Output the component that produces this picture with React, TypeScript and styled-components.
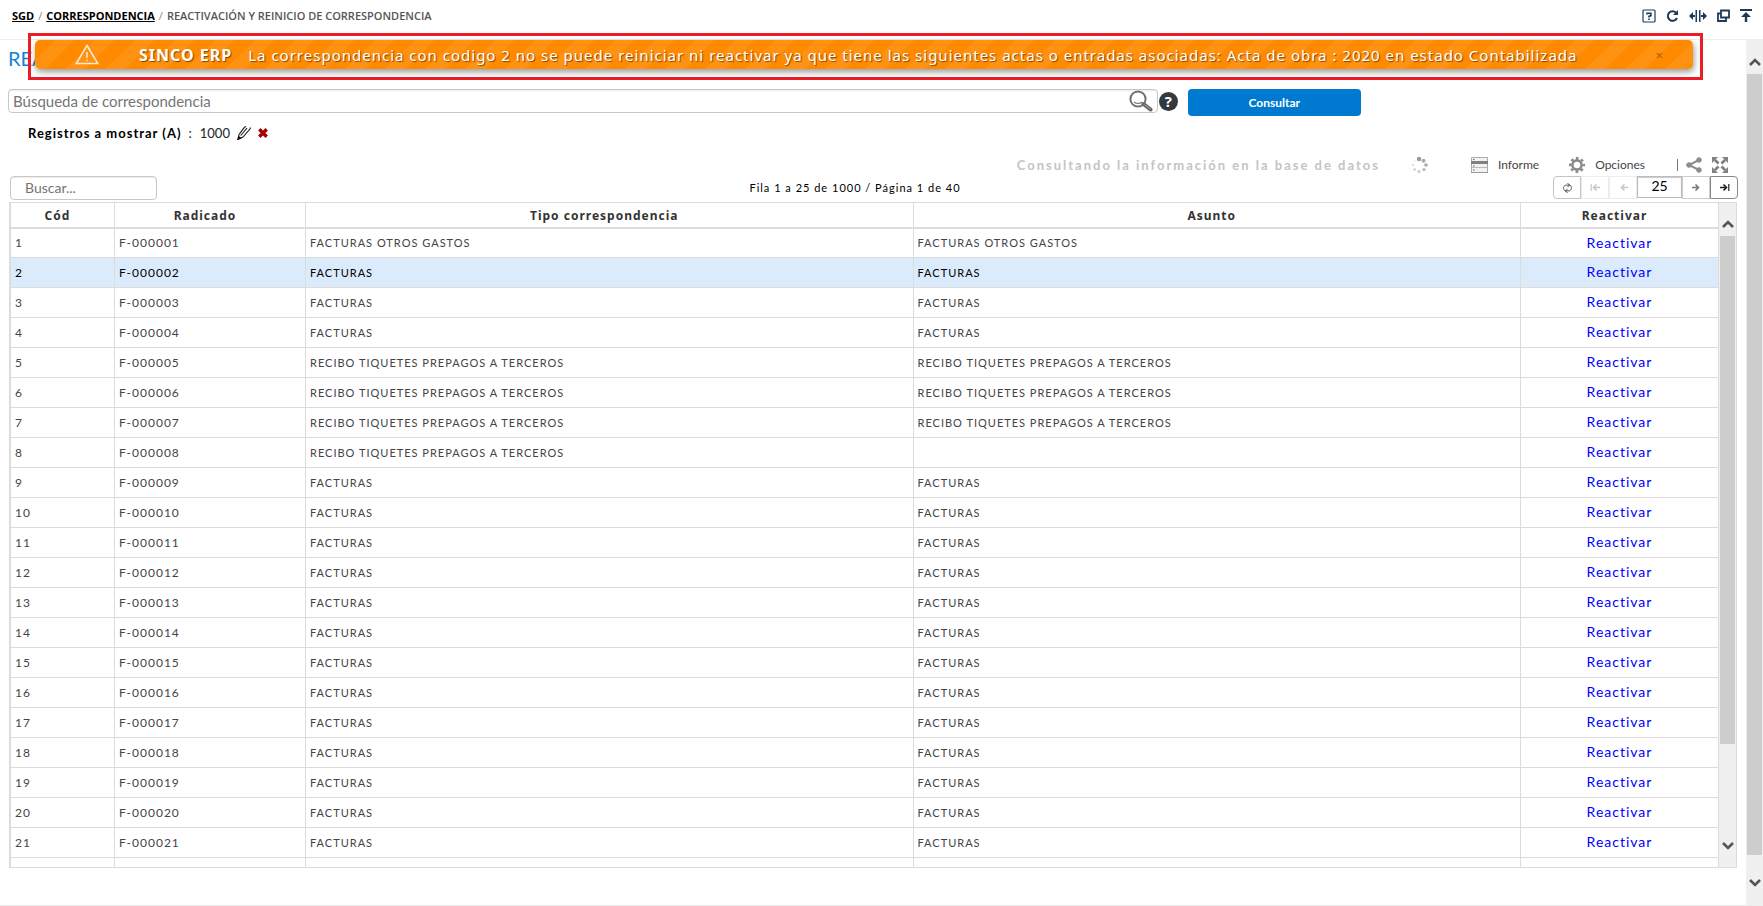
import React from 'react';
import styled, { createGlobalStyle } from 'styled-components';

const GlobalStyle = createGlobalStyle`
  *, *::before, *::after { box-sizing: border-box; }
  html, body, #root { height: 100%; }
  body { margin: 0; background: #fff; color: #222; font-family: Lato, "Liberation Sans", sans-serif; font-size: 12px; }
  button, input { font: inherit; color: inherit; }
  button { background: none; border: 0; padding: 0; cursor: pointer; }
`;

const uiFont = '"Open Sans", "Noto Sans", sans-serif';

const Page = styled.div`
  position: relative;
  display: flex;
  flex-direction: column;
  height: 100vh;
  overflow: hidden;
  border-bottom: 1px solid #ececec;
`;

const TopBar = styled.header`
  display: flex;
  flex: none;
  justify-content: space-between;
  align-items: center;
  height: 40px;
  padding: 0 11px 8px 12px;
  border-bottom: 1px solid #ececec;
`;

const Breadcrumb = styled.nav`
  display: flex;
  gap: 4px;
  font: 600 11px/16px ${uiFont};
  color: #555;
  a { color: #000; font-weight: 700; }
  i { font-style: normal; font-weight: 400; color: #888; }
`;

const TopActions = styled.div`
  display: flex;
  align-items: center;
  gap: 10px;
`;

const IconButton = styled.button`
  display: grid;
  place-items: center;
  color: #1d3b57;
  svg { display: block; }
`;

const Body = styled.div`
  display: flex;
  flex: 1;
  min-height: 0;
`;

const Main = styled.main`
  display: flex;
  flex: 1;
  flex-direction: column;
  min-width: 0;
  padding: 0 9px 37px;
`;

const Title = styled.h1`
  flex: none;
  height: 49px;
  margin: 0 0 0 -1px;
  padding-top: 5px;
  font-size: 20px;
  font-weight: 400;
  line-height: 26px;
  color: #1583d3;
`;

const QueryForm = styled.form`
  display: flex;
  flex: none;
  align-items: flex-start;
  height: 28px;
  margin-left: -1px;
`;

const SearchBox = styled.label`
  display: flex;
  align-items: center;
  width: 66.5%;
  height: 24px;
  padding: 0 4px;
  border: 1px solid #c8c8c8;
  border-radius: 4px;
  box-shadow: inset 0 1px 1px #eee;
  svg { flex: none; }
`;

const PlainInput = styled.input`
  flex: 1;
  min-width: 0;
  padding: 0;
  border: 0;
  outline: 0;
  background: none;
  font-size: 15px;
  line-height: 20px;
  &::placeholder { color: #757575; opacity: 1; }
`;

const HelpDot = styled.button`
  width: 19px;
  height: 19px;
  margin: 3px 10px 0 1px;
  border-radius: 50%;
  background: #333a3f;
  color: #fff;
  font: 700 15px/19px ${uiFont};
`;

const PrimaryButton = styled.button`
  width: 10%;
  height: 27px;
  border-radius: 4px;
  background: #007ad0;
  color: #fff;
  font-size: 12px;
  font-weight: 700;
`;

const Filter = styled.div`
  display: flex;
  flex: none;
  align-items: center;
  gap: 7px;
  height: 32px;
  padding-left: 19px;
  color: #222;
  font-size: 13px;
  letter-spacing: 1px;
  b { color: #000; }
  span { letter-spacing: 0; }
`;

const Tools = styled.div`
  display: flex;
  flex: none;
  justify-content: flex-end;
  align-items: center;
  height: 27px;
  padding: 4px 9px 0 0;
  color: #444;
`;

const Loading = styled.p`
  display: flex;
  align-items: center;
  gap: 31px;
  margin: 0 12px 0 0;
  font-size: 13px;
  font-weight: 700;
  letter-spacing: 2px;
  color: #c4c4c4;
`;

const ToolButton = styled.button`
  display: flex;
  align-items: center;
  gap: 10px;
  margin-left: 30px;
  font-size: 12px;
`;

const Divider = styled.span`
  width: 1px;
  height: 12px;
  margin: 0 8px 0 32px;
  background: #777;
`;

const GridBar = styled.div`
  display: grid;
  flex: none;
  grid-template-columns: 147px 1fr auto;
  align-items: center;
  height: 26px;
  margin: 0 -1px 0 1px;
  padding-bottom: 2px;
`;

const FilterInput = styled.input`
  height: 24px;
  padding: 0 14px 2px;
  border: 1px solid #c8c8c8;
  border-radius: 4px;
  box-shadow: inset 0 1px 1px #eee;
  font-size: 14px;
  &::placeholder { color: #757575; opacity: 1; }
`;

const RangeText = styled.p`
  margin: 0;
  padding-bottom: 2px;
  text-align: center;
  font-size: 11px;
  letter-spacing: 1px;
  color: #000;
`;

const Pager = styled.div`
  display: flex;
  align-items: flex-start;
  height: 24px;
`;

const PagerButton = styled.button<{ $line: string; $ink: string; $end?: 'left' | 'right' }>`
  display: grid;
  place-items: center;
  width: 28px;
  height: 23px;
  border: 1px solid ${(p) => p.$line};
  border-radius: ${(p) => (p.$end === 'left' ? '4px 0 0 4px' : p.$end === 'right' ? '0 4px 4px 0' : '0')};
  color: ${(p) => p.$ink};
`;

const PageSize = styled.input`
  width: 45px;
  height: 22px;
  padding: 0 0 3px;
  border: 1px solid #bbb;
  box-shadow: inset 0 1px 1px #ccc;
  text-align: center;
  font-size: 14px;
  color: #000;
`;

const GridFrame = styled.section`
  display: flex;
  flex: 1;
  min-height: 0;
  border: 1px solid #dcdcdc;
  border-left-width: 2px;
`;

const GridView = styled.div`
  flex: 1;
  min-width: 0;
  overflow: hidden;
`;

const Table = styled.table`
  width: 100%;
  table-layout: fixed;
  border-collapse: separate;
  border-spacing: 0;
`;

const HeadCell = styled.th<{ $width?: number }>`
  width: ${(p) => (p.$width ? `${p.$width}px` : 'auto')};
  height: 26px;
  padding: 1px 10px 0 0;
  border-right: 1px solid #dcdcdc;
  border-bottom: 2px solid #dcdcdc;
  font: 700 12px/16px "Noto Sans", sans-serif;
  letter-spacing: 1px;
  color: #333;
`;

const Cell = styled.td<{ $code?: boolean; $center?: boolean }>`
  height: 30px;
  padding: 0 4px;
  border-right: 1px solid #dcdcdc;
  border-bottom: 1px solid #dcdcdc;
  text-align: ${(p) => (p.$center ? 'center' : 'left')};
  font-size: ${(p) => (p.$code ? 12 : 11)}px;
  line-height: 16px;
  letter-spacing: 1px;
  white-space: nowrap;
  overflow: hidden;
  a { font-size: 14px; color: #00f; text-decoration: none; }
`;

const Row = styled.tr<{ $selected?: boolean }>`
  background: ${(p) => (p.$selected ? '#dbebfc' : '#fff')};
  color: ${(p) => (p.$selected ? '#000' : '#444')};
  &:first-child ${Cell} { height: 29px; }
`;

const Scrollbar = styled.div`
  display: flex;
  flex: none;
  flex-direction: column;
  width: 17px;
  padding: 0 1px;
  background: #f0f0f0;
  color: #555;
`;

const ScrollArrow = styled.div<{ $size: number; $end?: boolean }>`
  display: flex;
  flex: none;
  justify-content: center;
  align-items: ${(p) => (p.$end ? 'flex-start' : 'flex-end')};
  height: ${(p) => p.$size}px;
  padding: 8px 0;
`;

const ScrollTrack = styled.div`
  flex: 1;
  min-height: 0;
`;

const ScrollThumb = styled.div<{ $share: number }>`
  height: ${(p) => p.$share}%;
  background: #cdcdcd;
`;

const AlertFrame = styled.div`
  position: absolute;
  top: 33px;
  left: 28px;
  right: 60px;
  height: 47px;
  padding: 4px 7px 0 4px;
  border: 3px solid #ed1c24;
`;

const Alert = styled.div`
  display: flex;
  align-items: center;
  height: 29px;
  padding-left: 40px;
  border-radius: 5px;
  background: linear-gradient(-45deg, #ff9311 25%, #ff8a00 25%, #ff8a00 50%, #ff9311 50%, #ff9311 75%, #ff8a00 75%) 0 0 / 40px 40px;
  box-shadow: 1px 3px 6px rgba(0, 0, 0, 0.4);
  color: #fff;
  font: 400 15px/20px "Noto Sans", sans-serif;
  letter-spacing: 1px;
  text-shadow: 1px 1px 1px rgba(0, 0, 0, 0.5);
  white-space: nowrap;
  strong { margin: 0 16px 0 40px; font-size: 16px; }
`;

const AlertClose = styled.button`
  margin: 0 30px 0 auto;
  color: #a65c05;
  font: 400 13px/16px ${uiFont};
`;

const Chevron = ({ up }: { up?: boolean }) => (
  <svg width="12" height="8" viewBox="0 0 12 8" fill="none" stroke="currentColor" strokeWidth="2.6" aria-hidden="true">
    <path d={up ? 'M1 7l5-5 5 5' : 'M1 1l5 5 5-5'} />
  </svg>
);

type ScrollProps = { head: number; tail: number; share: number };
const VerticalScroll = ({ head, tail, share }: ScrollProps) => (
  <Scrollbar aria-hidden="true">
    <ScrollArrow $size={head}><Chevron up /></ScrollArrow>
    <ScrollTrack><ScrollThumb $share={share} /></ScrollTrack>
    <ScrollArrow $size={tail} $end><Chevron /></ScrollArrow>
  </Scrollbar>
);

const HelpIcon = () => (
  <svg width="14" height="14" viewBox="0 0 14 14" fill="none" stroke="currentColor">
    <rect x="1" y="1" width="12" height="12" rx="1" strokeWidth="1.2" />
    <path d="M5 5.4V4.2h3.9V6.6L7 7.4V8.4M7 9.6v1.5" strokeWidth="1.6" />
  </svg>
);

const ReloadIcon = () => (
  <svg width="13" height="14" viewBox="0 0 13 14" fill="none" stroke="currentColor" strokeWidth="2">
    <path d="M11 9a4.8 4.8 0 1 1-.8-5.2" />
    <path d="M12 1v5H7z" fill="currentColor" stroke="none" />
  </svg>
);

const SplitIcon = () => (
  <svg width="18" height="14" viewBox="0 0 18 14" fill="currentColor">
    <path d="M6.500 1H8v12H6.500zM10 1h1.500v12H10zM0 7l4-4v3h2v2H4v3zM18 7l-4-4v3h-2v2h2v3z" />
  </svg>
);

const WindowsIcon = () => (
  <svg width="13" height="13" viewBox="0 0 13 13" fill="none" stroke="currentColor" strokeWidth="1.8">
    <path d="M4 1.500h8v7H4zM4 4.500H1v7.500h8V9" />
  </svg>
);

const TopIcon = () => (
  <svg width="12" height="13" viewBox="0 0 12 13" fill="currentColor">
    <path d="M0 0h12v2H0zM6 3l5 5H7.200v5H4.800V8H1z" />
  </svg>
);

const WarningIcon = () => (
  <svg width="24" height="21" viewBox="0 0 24 21" fill="none" stroke="#ffe9cf" strokeWidth="1.500" aria-hidden="true">
    <path d="M12 1.500L22.800 19.500H1.200zM12 8v6M12 15.500v1.800" />
  </svg>
);

const LensIcon = () => (
  <svg width="25" height="22" viewBox="0 0 25 22" fill="none" aria-hidden="true">
    <path d="M15.500 14l7 5.500" stroke="#666" strokeWidth="4" strokeLinecap="round" />
    <path d="M16.500 14.500l6 4.700" stroke="#aaa" strokeWidth="1" />
    <circle cx="10" cy="9" r="7.600" stroke="#707070" strokeWidth="2" />
    <path d="M6 12q4 3 8 0" stroke="#777" strokeWidth="1.200" />
  </svg>
);

const PencilIcon = () => (
  <svg width="14" height="14" viewBox="0 0 14 14" fill="none" stroke="#111" strokeWidth="1.100">
    <path d="M2 8.500L7.500 1.200M3.700 9.500L10 2M6 11L13 3M2 8.500l-1 4.800L6 11" />
    <path d="M7.500 1.200L9 .6M13 3l.4-1.500" />
    <path d="M1 13.300l.6-2.800 2 1.600z" fill="#111" />
  </svg>
);

const RemoveIcon = () => (
  <svg width="10" height="10" viewBox="0 0 10 10" stroke="#a80000" strokeWidth="3.400">
    <path d="M1.300 1.300l7.400 7.400M8.700 1.300L1.300 8.700" />
  </svg>
);

const dots: [number, number, number, string][] = [
  [8, 3, 2.2, '#999'], [12.5, 4.8, 2, '#aaa'], [15, 9, 1.8, '#aaa'], [13, 13.5, 1.6, '#b5b5b5'],
  [8, 15.5, 1.5, '#ccc'], [3.6, 13.5, 1.3, '#ccc'], [1.8, 9, 1.2, '#ddd'], [3.5, 4.8, 1.1, '#eee'],
];
const Spinner = () => (
  <svg width="18" height="18" viewBox="0 0 18 18" role="img" aria-label="Cargando">
    {dots.map(([x, y, r, c]) => <circle key={`${x}-${y}`} cx={x} cy={y} r={r} fill={c} />)}
  </svg>
);

const ReportIcon = () => (
  <svg width="17" height="16" viewBox="0 0 17 16">
    <path d="M.5.500h16v15H.5z" fill="#f2f2f2" stroke="#aaa" />
    <path d="M0 4h17v3H0z" fill="#808080" />
    <path d="M1 10.500h15" stroke="#bbb" />
    <path d="M2 2h1.500v1H2zM2 8.500h1.500v1H2zM2 12.500h1.500v1H2z" fill="#666" />
    <path d="M0 15h17v1H0z" fill="#999" />
  </svg>
);

const GearIcon = () => (
  <svg width="16" height="16" viewBox="0 0 16 16" fill="none" stroke="#8a8a8a">
    <circle cx="8" cy="8" r="4.600" strokeWidth="2.600" />
    <circle cx="8" cy="8" r="6.800" strokeWidth="2.400" strokeDasharray="2.670 2.670" strokeDashoffset="1.330" />
  </svg>
);

const ShareIcon = () => (
  <svg width="16" height="16" viewBox="0 0 16 16" fill="#8c8c8c" stroke="#8c8c8c">
    <path d="M13 3L3 8l10 5" fill="none" strokeWidth="2" />
    <circle cx="13" cy="3" r="2.300" /><circle cx="3" cy="8" r="2.300" /><circle cx="13" cy="13" r="2.300" />
  </svg>
);

const ExpandIcon = () => (
  <svg width="16" height="16" viewBox="0 0 16 16" fill="#808080" stroke="#808080">
    <path d="M3 3l3.500 3.500M13 3L9.500 6.500M3 13l3.500-3.500M13 13L9.500 9.500" strokeWidth="2.800" />
    <path d="M0 0h6L0 6zM16 0v6l-6-6zM0 16v-6l6 6zM16 16h-6l6-6z" stroke="none" />
  </svg>
);

const CycleIcon = () => (
  <svg width="11" height="12" viewBox="0 0 11 12" fill="none" stroke="currentColor" strokeWidth="1">
    <path d="M4 9.500C1 8.500 1 4.500 3.200 3.200h4M7 2.500c3 1 3 5 .8 6.300h-4M5.500 1l2 2.200-2 2M5.500 6.800l-2 2 2 2.200" />
  </svg>
);

const ArrowIcon = ({ back, stop }: { back?: boolean; stop?: boolean }) => (
  <svg width="11" height="9" viewBox="0 0 11 9" fill="none" stroke="currentColor" strokeWidth="1.600">
    <g transform={back ? 'matrix(-1 0 0 1 11 0)' : undefined}>
      <path d="M1 4.500h6.500M4.500 1.500l3 3-3 3" />
      {stop && <path d="M9.800 1v7" strokeWidth="1.200" />}
    </g>
  </svg>
);

const documents = Array.from({ length: 21 }, (_, i) => {
  const id = i + 1;
  const type = id === 1 ? 'FACTURAS OTROS GASTOS' : id >= 5 && id <= 8 ? 'RECIBO TIQUETES PREPAGOS A TERCEROS' : 'FACTURAS';
  return { id, code: `F-${String(id).padStart(6, '0')}`, type, subject: id === 8 ? '' : type };
});

export default function App() {
  return (
    <Page>
      <GlobalStyle />
      <TopBar>
        <Breadcrumb aria-label="Ruta">
          <a href="#sgd">SGD</a><i>/</i><a href="#correspondencia">CORRESPONDENCIA</a><i>/</i>
          <span>REACTIVACIÓN Y REINICIO DE CORRESPONDENCIA</span>
        </Breadcrumb>
        <TopActions>
          <IconButton aria-label="Ayuda"><HelpIcon /></IconButton>
          <IconButton aria-label="Recargar"><ReloadIcon /></IconButton>
          <IconButton aria-label="Dividir"><SplitIcon /></IconButton>
          <IconButton aria-label="Ventanas"><WindowsIcon /></IconButton>
          <IconButton aria-label="Subir"><TopIcon /></IconButton>
        </TopActions>
      </TopBar>

      <Body>
        <Main>
          <Title>REA</Title>
          <QueryForm onSubmit={(e) => e.preventDefault()}>
            <SearchBox>
              <PlainInput aria-label="Búsqueda" placeholder="Búsqueda de correspondencia" />
              <LensIcon />
            </SearchBox>
            <HelpDot type="button" aria-label="Ayuda de búsqueda">?</HelpDot>
            <PrimaryButton type="submit">Consultar</PrimaryButton>
          </QueryForm>
          <Filter>
            <b>Registros a mostrar (A)</b>: <span>1000</span>
            <IconButton aria-label="Editar"><PencilIcon /></IconButton>
            <IconButton aria-label="Quitar"><RemoveIcon /></IconButton>
          </Filter>
          <Tools>
            <Loading>Consultando la información en la base de datos <Spinner /></Loading>
            <ToolButton><ReportIcon />Informe</ToolButton>
            <ToolButton><GearIcon />Opciones</ToolButton>
            <Divider />
            <TopActions>
              <IconButton aria-label="Compartir"><ShareIcon /></IconButton>
              <IconButton aria-label="Pantalla completa"><ExpandIcon /></IconButton>
            </TopActions>
          </Tools>
          <GridBar>
            <FilterInput aria-label="Buscar" placeholder="Buscar..." />
            <RangeText>Fila 1 a 25 de 1000 / Página 1 de 40</RangeText>
            <Pager>
              <PagerButton $line="#c4c4c4" $ink="#555" $end="left" aria-label="Actualizar"><CycleIcon /></PagerButton>
              <PagerButton $line="#ececec" $ink="#c8c8c8" aria-label="Primera"><ArrowIcon back stop /></PagerButton>
              <PagerButton $line="#ececec" $ink="#c8c8c8" aria-label="Anterior"><ArrowIcon back /></PagerButton>
              <PageSize aria-label="Filas por página" defaultValue="25" />
              <PagerButton $line="#ccc" $ink="#777" aria-label="Siguiente"><ArrowIcon /></PagerButton>
              <PagerButton $line="#888" $ink="#222" $end="right" aria-label="Última"><ArrowIcon stop /></PagerButton>
            </Pager>
          </GridBar>
          <GridFrame>
            <GridView>
              <Table>
                <thead>
                  <tr>
                    <HeadCell $width={104}>Cód</HeadCell>
                    <HeadCell $width={191}>Radicado</HeadCell>
                    <HeadCell>Tipo correspondencia</HeadCell>
                    <HeadCell>Asunto</HeadCell>
                    <HeadCell $width={198}>Reactivar</HeadCell>
                  </tr>
                </thead>
                <tbody>
                  {documents.map((d) => (
                    <Row key={d.id} $selected={d.id === 2}>
                      <Cell $code>{d.id}</Cell>
                      <Cell $code>{d.code}</Cell>
                      <Cell>{d.type}</Cell>
                      <Cell>{d.subject}</Cell>
                      <Cell $center><a href={`#reactivar-${d.id}`}>Reactivar</a></Cell>
                    </Row>
                  ))}
                  <Row>
                    <Cell /><Cell /><Cell /><Cell /><Cell />
                  </Row>
                </tbody>
              </Table>
            </GridView>
            <VerticalScroll head={33} tail={33} share={85} />
          </GridFrame>
        </Main>
        <VerticalScroll head={34} tail={34} share={98} />
      </Body>

      <AlertFrame role="alert">
        <Alert>
          <WarningIcon />
          <strong>SINCO ERP</strong>
          La correspondencia con codigo 2 no se puede reiniciar ni reactivar ya que tiene las siguientes actas o entradas asociadas: Acta de obra : 2020 en estado Contabilizada
          <AlertClose aria-label="Cerrar">×</AlertClose>
        </Alert>
      </AlertFrame>
    </Page>
  );
}
